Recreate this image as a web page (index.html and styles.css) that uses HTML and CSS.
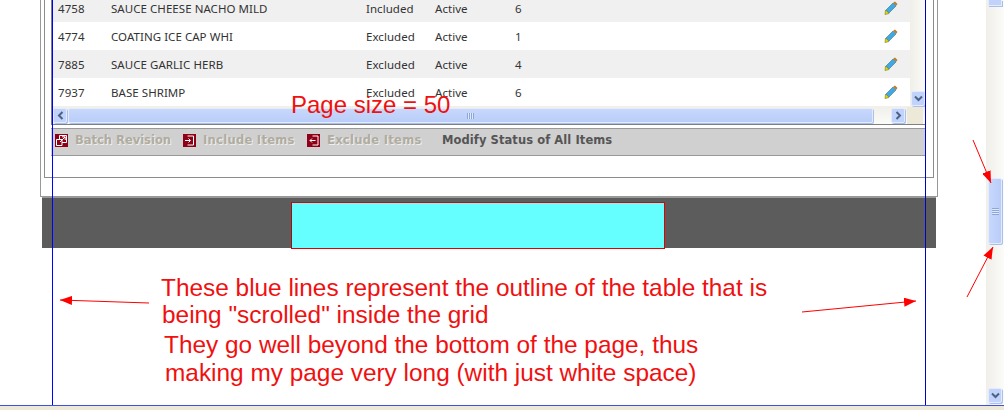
FILE: index.html
```html
<!DOCTYPE html>
<html lang="en">
<head>
    <meta charset="UTF-8">
    <title>Grid page size</title>
    <link rel="stylesheet" href="styles.css">
</head>
<body>
    <svg width="0" height="0" class="defs">
        <symbol id="pencil" viewBox="0 0 14 14">
            <path d="M1.500 9l3.500 3.500-4 1z" fill="#e6e000" stroke="#77770f" stroke-width=".6"/>
            <path d="M2 9l7-7 3 3-7 7z" fill="#3fa9e0" stroke="#3a6f90" stroke-width=".6"/>
            <path d="M9.200 1.800l1.800-1.300 2.500 2.500-1.300 1.800z" fill="#c07a20"/>
        </symbol>
        <symbol id="icon-batch" viewBox="0 0 13 13">
            <rect width="13" height="13" fill="#8e0015"/>
            <path d="M1.500 5.500h5.500v6h-5.500zM4.500 5v-3.500h7v7h-4.500M5 8l5-5M7 2.800h3.200v3.200" fill="none" stroke="#fff"/>
        </symbol>
        <symbol id="icon-include" viewBox="0 0 13 13">
            <rect width="13" height="13" fill="#8e0015"/>
            <path d="M4.500 2h6v9h-6M2 6.500h5M5.500 4.500l2 2-2 2" fill="none" stroke="#fff"/>
        </symbol>
        <symbol id="icon-exclude" viewBox="0 0 13 13">
            <rect width="13" height="13" fill="#8e0015"/>
            <path d="M5.500 2h5.500v9h-5.500M3 6.500h5.500M5 4.500l-2 2 2 2" fill="none" stroke="#fff"/>
        </symbol>
        <symbol id="arrow-down" viewBox="0 0 9 7">
            <path d="M1 1.500l3.500 3.500 3.500-3.500" fill="none" stroke="#4d6185" stroke-width="2"/>
        </symbol>
        <symbol id="arrow-left" viewBox="0 0 7 9">
            <path d="M5.500 1l-3.500 3.500 3.500 3.500" fill="none" stroke="#4d6185" stroke-width="2"/>
        </symbol>
        <symbol id="arrow-right" viewBox="0 0 7 9">
            <path d="M1.500 1l3.500 3.500-3.500 3.500" fill="none" stroke="#4d6185" stroke-width="2"/>
        </symbol>
    </svg>

    <div class="window">
        <div class="viewport">
            <div class="content">
                <div class="outer-frame">
                    <div class="inner-frame">
                        <div class="grid">
                            <div class="grid-body">
                                <div class="rows">
                                    <div class="row alt">
                                        <span>4758</span><span>SAUCE CHEESE NACHO MILD</span><span>Included</span><span>Active</span><span>6</span>
                                        <svg class="edit"><use href="#pencil"/></svg>
                                    </div>
                                    <div class="row">
                                        <span>4774</span><span>COATING ICE CAP WHI</span><span>Excluded</span><span>Active</span><span>1</span>
                                        <svg class="edit"><use href="#pencil"/></svg>
                                    </div>
                                    <div class="row alt">
                                        <span>7885</span><span>SAUCE GARLIC HERB</span><span>Excluded</span><span>Active</span><span>4</span>
                                        <svg class="edit"><use href="#pencil"/></svg>
                                    </div>
                                    <div class="row">
                                        <span>7937</span><span>BASE SHRIMP</span><span>Excluded</span><span>Active</span><span>6</span>
                                        <svg class="edit"><use href="#pencil"/></svg>
                                    </div>
                                </div>
                                <div class="vscroll">
                                    <div class="scroll-btn"><svg class="arrow-v"><use href="#arrow-down"/></svg></div>
                                </div>
                            </div>
                            <div class="hscroll">
                                <div class="scroll-btn"><svg class="arrow-h"><use href="#arrow-left"/></svg></div>
                                <div class="hthumb"><span class="grip-v"></span></div>
                                <div class="scroll-btn"><svg class="arrow-h"><use href="#arrow-right"/></svg></div>
                                <div class="corner"></div>
                            </div>
                        </div>
                        <div class="toolbar">
                            <svg class="tool-icon"><use href="#icon-batch"/></svg>
                            <span class="tool-text batch">Batch Revision</span>
                            <svg class="tool-icon"><use href="#icon-include"/></svg>
                            <span class="tool-text include">Include Items</span>
                            <svg class="tool-icon"><use href="#icon-exclude"/></svg>
                            <span class="tool-text exclude">Exclude Items</span>
                            <span class="tool-title">Modify Status of All Items</span>
                        </div>
                    </div>
                </div>
                <div class="band">
                    <div class="cyan-box"></div>
                </div>
            </div>
            <div class="page-scroll">
                <div class="page-top"></div>
                <div class="page-thumb"><span class="grip-h"></span></div>
                <div class="scroll-btn page-down"><svg class="arrow-v"><use href="#arrow-down"/></svg></div>
            </div>

            <!-- markup drawn over the screenshot -->
            <div class="blue-line left"></div>
            <div class="blue-line right"></div>
            <svg class="arrows" width="1004" height="405">
                <defs>
                    <marker id="head" markerWidth="12" markerHeight="9" refX="12" refY="4.500" orient="auto" markerUnits="userSpaceOnUse">
                        <path d="M0 0L12 4.500L0 9z" fill="#f00"/>
                    </marker>
                </defs>
                <line x1="973" y1="140" x2="991" y2="183" marker-end="url(#head)"/>
                <line x1="967" y1="297" x2="993" y2="247" marker-end="url(#head)"/>
                <line x1="149" y1="303" x2="60" y2="300" marker-end="url(#head)"/>
                <line x1="802" y1="312" x2="916" y2="301" marker-end="url(#head)"/>
            </svg>
            <div class="note page-size">Page size = 50</div>
            <div class="note note-a">These blue lines represent the outline of the table that is<br><span class="nudge">being "scrolled" inside the grid</span></div>
            <div class="note note-b">They go well beyond the bottom of the page, thus<br><span class="nudge">making my page very long (with just white space)</span></div>
        </div>
        <div class="statusbar"></div>
    </div>
</body>
</html>
```

FILE: styles.css
```css
html, body {
    margin: 0;
    padding: 0;
    background: #fff;
}

.defs {
    display: block;
    height: 0;
}

.window {
    width: 1004px;
    height: 410px;
    overflow: hidden;
    font-family: 'Noto Sans', sans-serif;
}

.viewport {
    position: relative;
    display: flex;
    height: 405px;
}

.content {
    flex: 1;
    overflow: hidden;
}

.outer-frame {
    box-sizing: border-box;
    width: 898px;
    height: 197px;
    margin-left: 40px;
    padding: 0 3px;
    border: 1px solid #999;
    border-top: none;
}

.inner-frame {
    box-sizing: border-box;
    width: 890px;
    height: 178px;
    padding: 0 6px;
    border: 1px solid #8c8c8c;
    border-top: none;
}

.grid {
    width: 875px;
    height: 125px;
    box-sizing: border-box;
    border-left: 1px solid #808080;
    border-bottom: 1px solid #808080;
}

.grid-body {
    display: flex;
    height: 106px;
}

.rows {
    flex: 1;
    margin-top: -6px;
}

.row {
    display: grid;
    grid-template-columns: 53px 255px 69px 80px 369px 13px;
    align-items: center;
    height: 28px;
    padding-left: 6px;
    font-size: 11.5px;
    letter-spacing: .05px;
    color: #333;
    background: #fff;
}

.row.alt {
    background: #f0f0f0;
}

.edit {
    width: 14px;
    height: 14px;
}

.vscroll {
    display: flex;
    align-items: flex-end;
    justify-content: center;
    width: 16px;
    background: linear-gradient(to right, #f0efe9, #fbfbf8);
}

.scroll-btn {
    display: flex;
    align-items: center;
    justify-content: center;
    box-sizing: border-box;
    width: 14px;
    height: 15px;
    border: 1px solid #e4ecfc;
    border-radius: 2px;
    background: #c1d3fb;
    box-shadow: 1px 1px 0 #a9bfee;
}

.arrow-v {
    width: 9px;
    height: 7px;
}

.arrow-h {
    width: 7px;
    height: 9px;
}

.hscroll {
    display: flex;
    align-items: center;
    height: 18px;
    box-sizing: border-box;
    padding: 2px 0 1px 1px;
    background: linear-gradient(#f0efe9, #fbfbf8);
}

.hthumb {
    display: flex;
    align-items: center;
    justify-content: center;
    box-sizing: border-box;
    width: 805px;
    height: 15px;
    margin: 0 18px 0 1px;
    border: 1px solid #e4ecfc;
    border-radius: 2px;
    background: linear-gradient(#c8d8fb, #b9cdf9);
    box-shadow: 1px 1px 0 #a9bfee;
}

.grip-v {
    width: 7px;
    height: 6px;
    background: repeating-linear-gradient(to right, #8da6d8 0 1px, #e0e8fb 1px 2px);
}

.corner {
    width: 16px;
    height: 17px;
    margin-left: 2px;
    margin-top: -1px;
    background: #ece9d8;
}

.toolbar {
    display: flex;
    align-items: center;
    box-sizing: border-box;
    width: 875px;
    height: 28px;
    margin-top: 3px;
    padding: 0 0 4px 4px;
    border-top: 1px solid #999;
    border-bottom: 1px solid #999;
    background: #d0d0d0;
    font-family: 'DejaVu Sans', sans-serif;
    font-size: 11.5px;
    font-weight: bold;
}

.tool-icon {
    width: 13px;
    height: 13px;
    flex-shrink: 0;
}

.tool-text {
    margin-left: 7px;
    color: #b0aca0;
    text-shadow: 1px 1px 0 #eee;
    white-space: nowrap;
}

.tool-text.batch {
    width: 108px;
}

.tool-text.include {
    width: 104px;
    letter-spacing: .3px;
}

.tool-text.exclude {
    width: 115px;
    letter-spacing: .3px;
}

.tool-title {
    color: #555;
    white-space: nowrap;
    letter-spacing: .08px;
}

.band {
    box-sizing: border-box;
    width: 894px;
    height: 51px;
    margin-left: 42px;
    padding: 4px 0 0 249px;
    border-top: 1px solid #999;
    background: #5c5c5c;
}

.cyan-box {
    box-sizing: border-box;
    width: 374px;
    height: 47px;
    border: 1px solid #e00000;
    border-left-color: #a01010;
    background: #66ffff;
}

.page-scroll {
    display: flex;
    flex-direction: column;
    align-items: center;
    width: 18px;
    background: linear-gradient(to right, #f0efe9, #fbfbf8);
}

.page-top {
    box-sizing: border-box;
    width: 14px;
    height: 6px;
    border: 1px solid #e4ecfc;
    border-top: none;
    background: #c1d3fb;
    box-shadow: 1px 1px 0 #a9bfee;
}

.page-thumb {
    display: flex;
    align-items: center;
    justify-content: center;
    box-sizing: border-box;
    width: 14px;
    height: 66px;
    margin-top: 172px;
    border: 1px solid #e4ecfc;
    border-radius: 2px;
    background: linear-gradient(to right, #c8d8fb, #b9cdf9);
    box-shadow: 1px 1px 0 #a9bfee;
}

.grip-h {
    width: 7px;
    height: 7px;
    background: repeating-linear-gradient(#8da6d8 0 1px, #e0e8fb 1px 2px);
}

.page-down {
    margin-top: auto;
    margin-bottom: 2px;
}

.blue-line {
    position: absolute;
    top: 0;
    width: 1px;
    height: 405px;
}

.blue-line.left {
    left: 52px;
    background: #0000ff;
}

.blue-line.right {
    left: 925px;
    background: #0000c8;
}

.arrows {
    position: absolute;
    left: 0;
    top: 0;
}

.arrows line {
    stroke: #f00;
    stroke-width: 1;
}

.note {
    position: absolute;
    font-family: 'Liberation Sans', Arial, sans-serif;
    font-size: 24.4px;
    color: #f01010;
    white-space: nowrap;
}

.page-size {
    left: 291px;
    top: 91px;
    font-size: 24px;
}

.note-a {
    left: 161px;
    top: 274px;
    line-height: 27px;
}

.note-b {
    left: 164px;
    top: 331px;
    line-height: 28px;
}

.nudge {
    margin-left: 1px;
}

.statusbar {
    height: 4px;
    border-top: 1px solid #4050e0;
    background: #ece9d8;
}
```
